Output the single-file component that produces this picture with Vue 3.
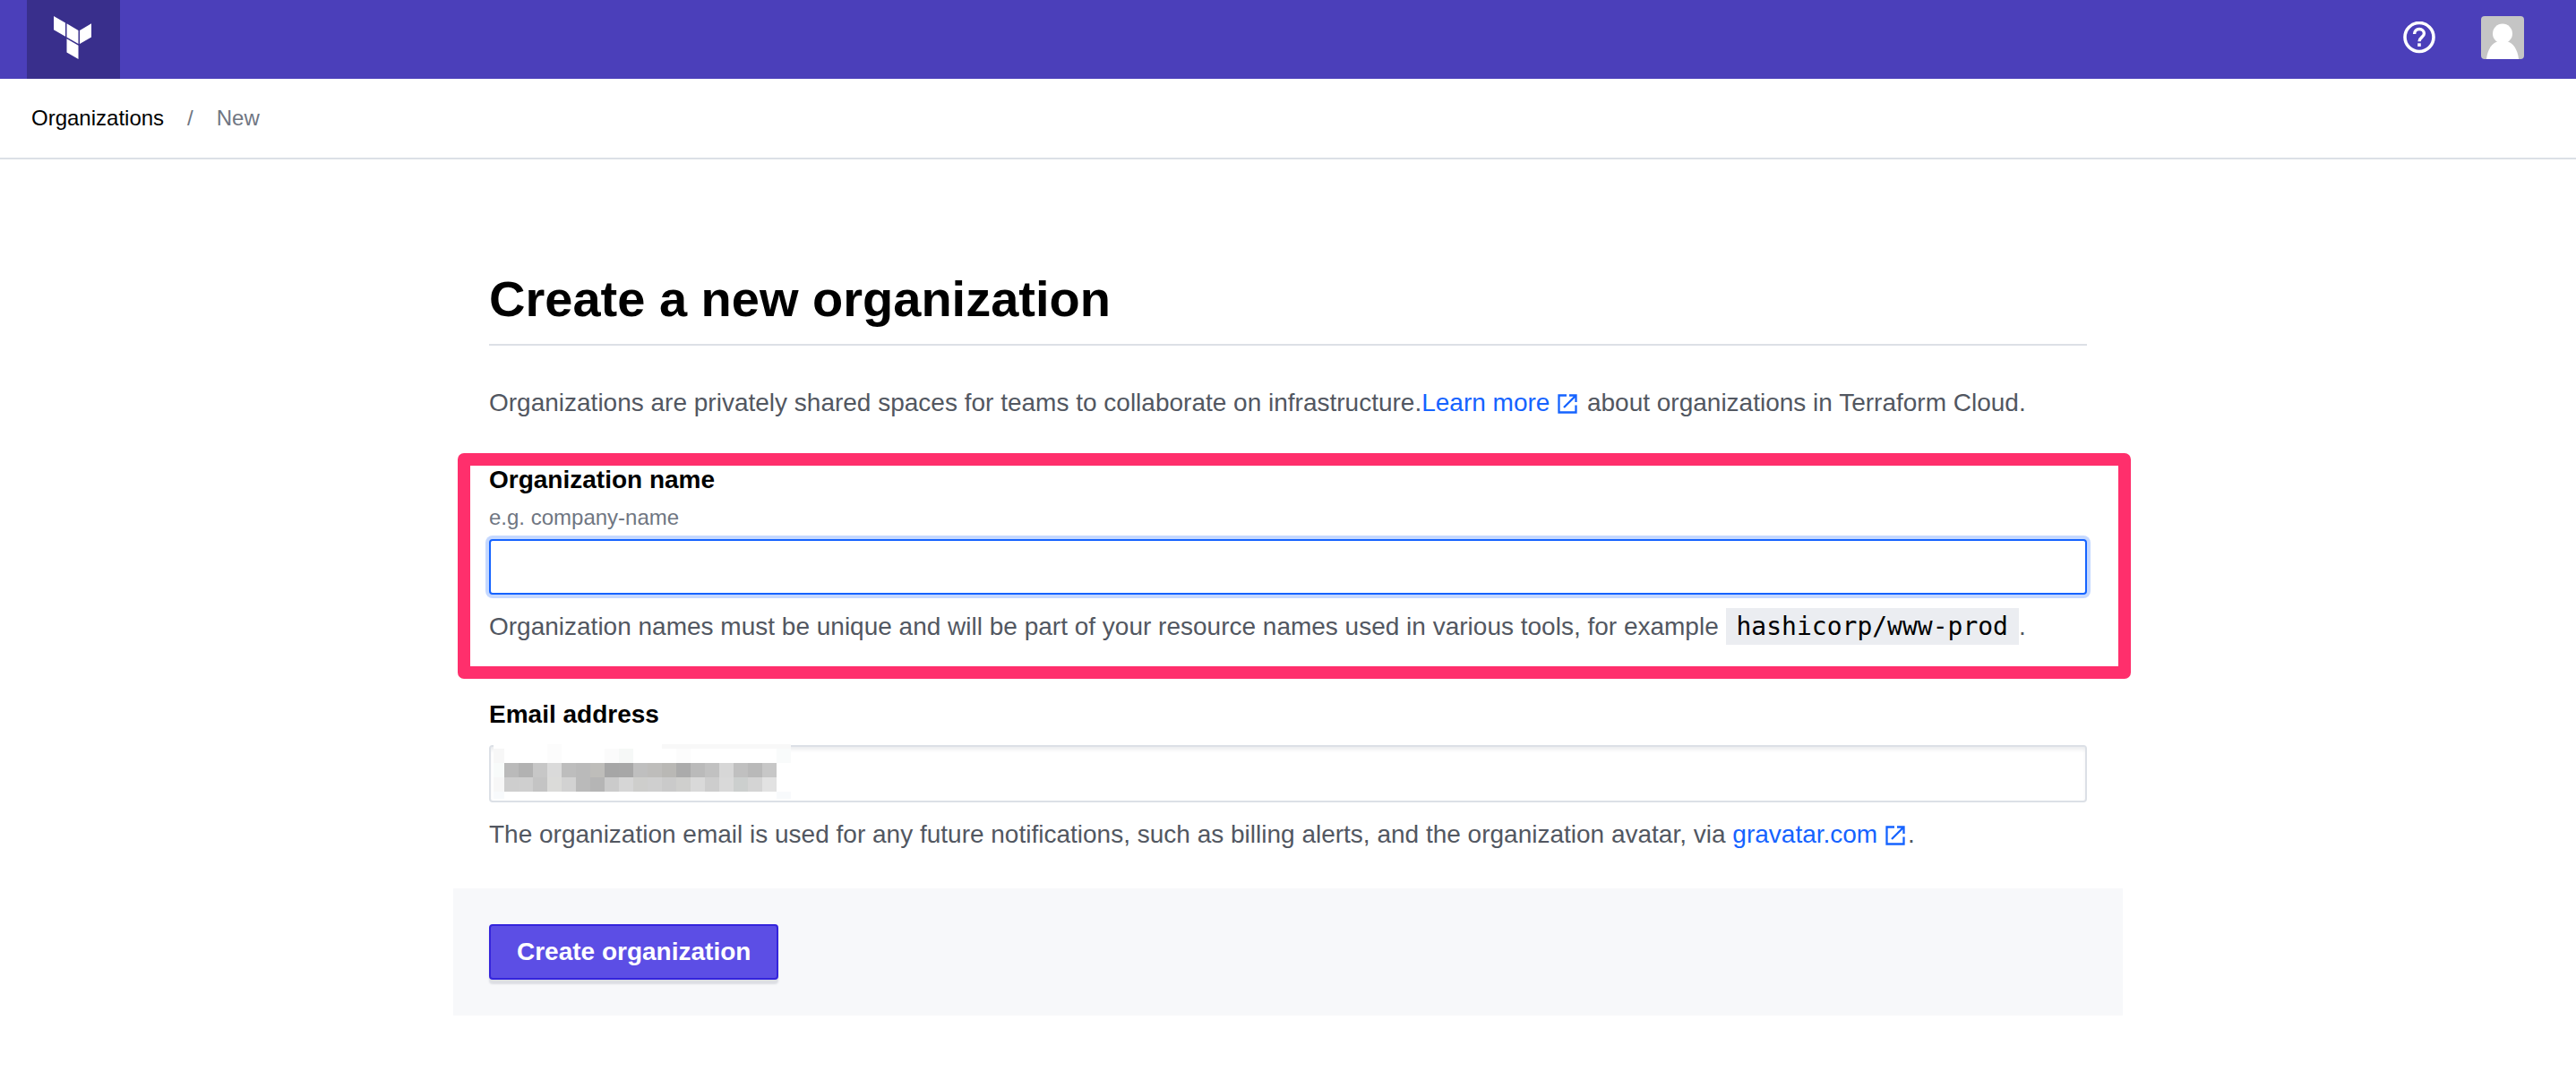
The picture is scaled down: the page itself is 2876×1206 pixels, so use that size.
<script setup>
import { ref, computed } from 'vue'

const organization = ref('')
const email = ref('')

const upper = ['#bababa', '#b2b2b2', '#c7c7c7', '#dadada', '#bdbdbd', '#bababa', '#bebdba', '#a6a6a6', '#a7a7a7', '#bfbfbf', '#bebdbb', '#b9b8b5', '#ababab', '#bababa', '#c1c1c1', '#d7d7d7', '#c0c0c0', '#b9b9b9', '#c7c7c7']
const lower = ['#cecece', '#cfcfcf', '#c4c4c4', '#dbdbd9', '#d2d2d2', '#bababa', '#b5b5b5', '#cbcbcb', '#d6d6d6', '#cececc', '#cfcfcf', '#cacaca', '#cfcfcd', '#d9d9d9', '#cdcdcd', '#d9d9d9', '#cccfce', '#d4d4d4', '#e2e2e2']
const cells = computed(() => [upper, lower].flatMap((row, r) =>
  row.map((fill, c) => ({ fill, x: 12 + c * 16, y: 21 + r * 16 }))))
</script>

<template>
  <div class="page">
    <header class="topbar">
      <a class="brand" href="#" aria-label="Terraform Cloud">
        <svg width="42" height="48" viewBox="0 0 42 48" fill="#fff" aria-hidden="true">
          <path d="M0 0L13 7.500V22.800L0 15.200ZM14.500 8.300L27.500 15.900V31L14.500 23.500ZM29 15.900L42 8.300V23.500L29 31ZM14.500 25.200L27.500 32.700V48L14.500 40.400Z" />
        </svg>
      </a>
      <div class="tools">
        <button class="tool" type="button" aria-label="Help">
          <svg width="36" height="36" viewBox="0 0 36 36" fill="none" aria-hidden="true">
            <circle cx="18" cy="17.500" r="16" stroke="#fff" stroke-width="3.600" />
            <path d="M12.600 14.100C12.600 10.500 15 8.500 18 8.500S23.400 10.700 23.400 13.500C23.400 17.500 18 17.800 18 22.300" stroke="#fff" stroke-width="3.400" />
            <path d="M16.200 24.300h3.600v3.600h-3.600z" fill="#fff" />
          </svg>
        </button>
        <button class="tool" type="button" aria-label="Account">
          <svg class="avatar" width="48" height="48" viewBox="0 0 48 48" aria-hidden="true">
            <rect width="48" height="48" fill="#c5c5c5" />
            <circle cx="24" cy="19.500" r="11" fill="#fff" />
            <path d="M6 48C7 37 13 29 19 28.500H29C35 29 41 37 42 48Z" fill="#fff" />
          </svg>
        </button>
      </div>
    </header>

    <nav class="breadcrumb" aria-label="Breadcrumb">
      <a href="#">Organizations</a>
      <span>/</span>
      <span>New</span>
    </nav>

    <main class="content">
      <h1>Create a new organization</h1>
      <p class="intro">Organizations are privately shared spaces for teams to collaborate on infrastructure.<a href="#">Learn more <svg class="external" viewBox="0 0 24 24" aria-hidden="true"><path d="M11 2.500H2.500V21.500H21.500V13.500M14 2.500H21.500V10M21 3L8 16" /></svg></a> about organizations in Terraform Cloud.</p>

      <form @submit.prevent>
        <div class="field highlighted">
          <label for="organization">Organization name</label>
          <p id="organization-hint" class="hint">e.g. company-name</p>
          <input id="organization" v-model="organization" class="focused" type="text" aria-describedby="organization-hint">
          <p class="help">Organization names must be unique and will be part of your resource names used in various tools, for example <code>hashicorp/www-prod</code>.</p>
        </div>

        <div class="field">
          <label for="email">Email address</label>
          <div class="control">
            <input id="email" v-model="email" type="email">
            <svg class="redaction" width="332" height="61" viewBox="0 0 332 61" shape-rendering="crispEdges" aria-hidden="true">
              <rect width="332" height="61" fill="#fff" />
              <rect x="188" width="144" height="5" fill="#f8f8f8" />
              <rect x="60" width="16" height="21" fill="#fcfcfc" />
              <rect y="5" width="12" height="16" fill="#f7f7f7" />
              <rect y="21" width="12" height="16" fill="#f8fbfa" />
              <rect y="37" width="12" height="16" fill="#f7f7f7" />
              <rect y="53" width="12" height="8" fill="#f8fafc" />
              <rect x="124" y="5" width="16" height="16" fill="#fbfbfb" />
              <rect x="140" y="5" width="16" height="16" fill="#f6f8f7" />
              <rect x="204" y="5" width="16" height="16" fill="#fcfcfc" />
              <rect x="316" y="5" width="16" height="16" fill="#f9fbfb" />
              <rect x="316" y="53" width="16" height="8" fill="#f8fafc" />
              <rect v-for="cell in cells" :key="`${cell.x}-${cell.y}`" :x="cell.x" :y="cell.y" width="16" height="16" :fill="cell.fill" />
            </svg>
          </div>
          <p class="help">The organization email is used for any future notifications, such as billing alerts, and the organization avatar, via <a href="#">gravatar.com <svg class="external" viewBox="0 0 24 24" aria-hidden="true"><path d="M11 2.500H2.500V21.500H21.500V13.500M14 2.500H21.500V10M21 3L8 16" /></svg></a>.</p>
        </div>

        <div class="actions">
          <button class="primary" type="submit">Create organization</button>
        </div>
      </form>
    </main>
  </div>
</template>

<style>
body {
  margin: 0;
  background: #fff;
}
</style>

<style scoped>
.page {
  font: 28px/40px "Liberation Sans", Arial, sans-serif;
  color: #525761;
}

.topbar {
  display: flex;
  justify-content: space-between;
  height: 88px;
  padding: 0 58px 0 30px;
  background: #4b3fba;
}

.brand {
  display: flex;
  width: 104px;
  box-sizing: border-box;
  padding: 18px 30px 0;
  background: #392f8c;
}

.tools {
  display: flex;
  align-items: center;
  gap: 51px;
  padding-bottom: 4px;
}

.tool {
  display: flex;
  padding: 0;
  border: 0;
  background: none;
}

.avatar {
  border-radius: 4px;
}

.breadcrumb {
  display: flex;
  align-items: center;
  gap: 26px;
  height: 88px;
  padding: 0 35px;
  border-bottom: 2px solid #dce0e6;
  font-size: 24px;
  color: #6f7682;
}

.breadcrumb a {
  color: #000;
}

a {
  color: #1563ff;
  text-decoration: none;
}

.content {
  max-width: 1784px;
  margin: 0 auto;
  padding: 124px 40px 72px;
}

h1 {
  margin: 0 0 44px;
  padding-bottom: 18px;
  border-bottom: 2px solid #dce0e6;
  font-size: 56px;
  line-height: 64px;
  color: #000;
}

p {
  margin: 0;
}

.external {
  width: 24px;
  height: 24px;
  margin-right: 2px;
  vertical-align: -4px;
  fill: none;
  stroke: #1563ff;
  stroke-width: 2.300;
}

.intro {
  margin-bottom: 36px;
}

.field {
  display: flex;
  flex-direction: column;
}

label {
  line-height: 32px;
  font-weight: 700;
  color: #000;
}

.highlighted {
  margin: 0 -49px 24px -35px;
  padding: 0 35px 24px 21px;
  border: 14px solid #ff2f6c;
  border-radius: 7px;
}

.hint {
  margin: 6px 0 4px;
  font-size: 24px;
  color: #6f7682;
}

input {
  box-sizing: border-box;
  width: 100%;
  height: 64px;
  padding: 0 14px;
  border: 2px solid #dce0e6;
  border-radius: 4px;
  outline: 0;
  background: #fff;
  box-shadow: inset 0 4px 4px -1px #ebecee;
  font: inherit;
}

.focused {
  height: 62px;
  border-color: #1563ff;
  box-shadow: 0 0 0 4px #c5d8ff;
}

.help {
  margin-top: 16px;
}

code {
  padding: 4px 12px;
  background: #ebedf1;
  font: 28px/32px "DejaVu Sans Mono", monospace;
  color: #000;
}

.control {
  position: relative;
  display: flex;
  margin-top: 18px;
}

.redaction {
  position: absolute;
  top: -1px;
  left: 5px;
}

.actions {
  display: flex;
  margin: 40px -40px 0;
  padding: 40px;
  background: #f7f8fa;
}

.primary {
  height: 62px;
  padding: 0 29px;
  border: 2px solid #3424dc;
  border-radius: 4px;
  background: #5c4ee5;
  box-shadow: 0 5px 2px #dcdee3;
  font: 700 28px/40px "Liberation Sans", Arial, sans-serif;
  color: #fff;
}
</style>
